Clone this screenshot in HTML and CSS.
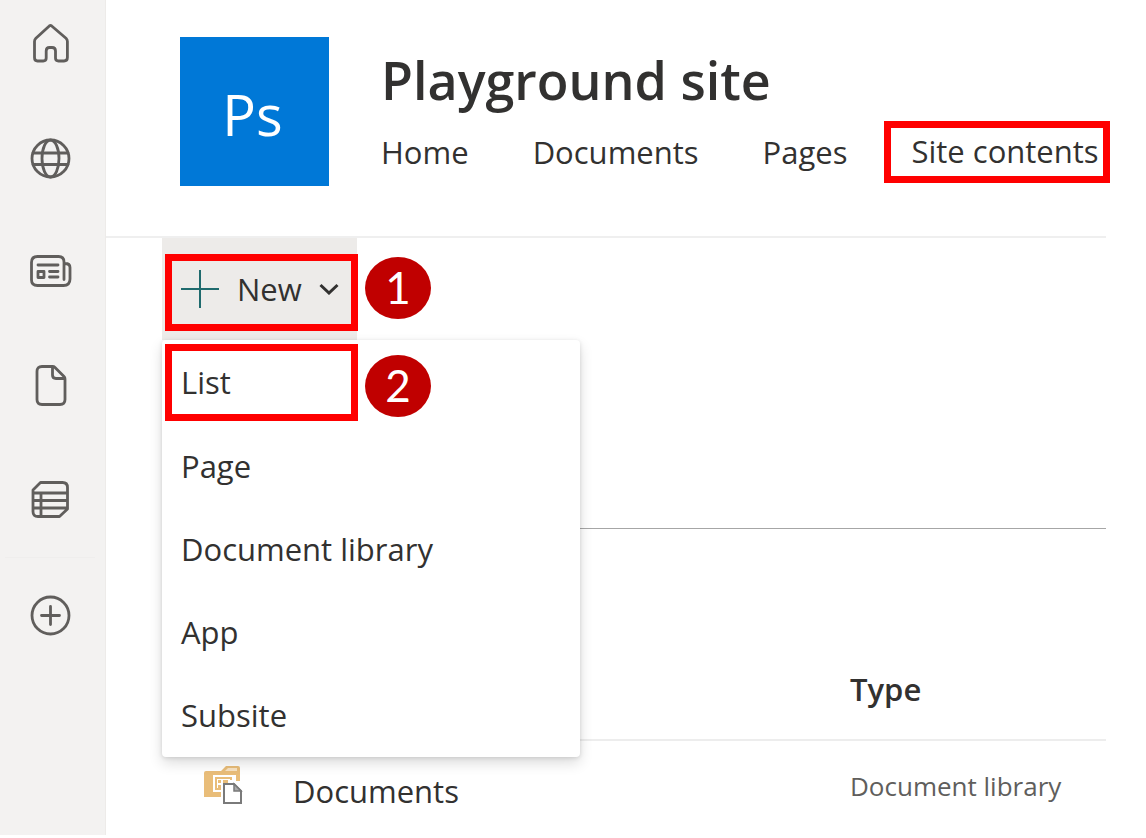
FILE: index.html
```html
<!DOCTYPE html>
<html lang="en">
<head>
<meta charset="utf-8">
<title>Playground site - Site contents</title>
<link rel="stylesheet" href="styles.css">
</head>
<body>
<div class="page">
  <nav class="rail" aria-label="Global">
    <a class="rail-link" href="#" aria-label="Home">
      <svg class="icon" viewBox="0 0 42 42"><path d="M20.600 2.700Q21.500 2 22.400 2.700L37 15.300Q38.400 16.700 38.400 18.500V34.500Q38.400 38 35 38H29.500Q26.500 38 26.500 35V28Q26.500 24.500 23 24.500H20.500Q17.200 24.500 17.200 28V35Q17.200 38 14.200 38H8.500Q5.500 38 5.500 34.500V18.500Q5.500 16.700 6.900 15.300Z"/></svg>
    </a>
    <a class="rail-link" href="#" aria-label="Sites">
      <svg class="icon" viewBox="0 0 42 42"><circle cx="21.500" cy="21.500" r="18.500"/><ellipse cx="21.500" cy="21.500" rx="8.500" ry="18.500"/><path d="M4 16h35M4 27.500h35"/></svg>
    </a>
    <a class="rail-link" href="#" aria-label="News">
      <svg class="icon" viewBox="0 0 42 42"><path d="M35 28.500V11Q35 5.500 29.500 5.500H8.500Q2.500 5.500 2.500 11.500V29Q2.500 34.500 8.500 34.500H34.500Q41 34.500 41 28V16.500Q41 12.500 36 12.500"/><path d="M9 14h20M20.500 20.500h8.500M20.500 26h8.500M9 20.500h6v6H9z"/></svg>
    </a>
    <a class="rail-link" href="#" aria-label="Files">
      <svg class="icon" viewBox="0 0 42 42"><path d="M13 1.500H23.500Q25 1.500 26 2.500L35 11.500Q36 12.500 36 14V34.500Q36 39.500 31 39.500H13Q8 39.500 8 34.500V6.500Q8 1.500 13 1.500ZM23.500 2V10Q23.500 13.500 27 13.500H35.500"/></svg>
    </a>
    <a class="rail-link" href="#" aria-label="Lists">
      <svg class="icon" viewBox="0 0 42 42"><path d="M11.500 3.500H33.500Q38.500 3.500 38.500 8.500V30L30.500 37.500H9Q4 37.500 4 32.500V11ZM4 14H38.500M4 21.500H38.500M4 29H38.500M12 14V37.500"/></svg>
    </a>
    <hr class="rail-divider">
    <a class="rail-link" href="#" aria-label="Create">
      <svg class="icon" viewBox="0 0 42 42"><circle cx="21.500" cy="21.500" r="18.500"/><path d="M12.500 21.500h18M21.500 12.500v18"/></svg>
    </a>
  </nav>

  <main class="main">
    <header class="site-header">
      <div class="site-logo">Ps</div>
      <div class="site-info">
        <h1 class="site-title">Playground site</h1>
        <nav class="site-nav" aria-label="Site">
          <a href="#">Home</a>
          <a href="#">Documents</a>
          <a href="#">Pages</a>
          <a class="marked-link" href="#">Site contents</a>
        </nav>
      </div>
    </header>

    <section class="commands">
      <div class="new-wrap">
        <button class="new-button marked" type="button" aria-haspopup="menu" aria-expanded="true">
          <svg class="plus" viewBox="0 0 38 38"><path d="M0 19h38M19 0v38"/></svg>
          <span>New</span>
          <svg class="chevron" viewBox="0 0 20 12"><path d="M1.500 2l8.500 8 8.500-8"/></svg>
        </button>
        <span class="step step-one">1</span>
        <span class="step step-two">2</span>
        <div class="menu" role="menu">
          <button class="menu-item marked" type="button" role="menuitem">List</button>
          <button class="menu-item" type="button" role="menuitem">Page</button>
          <button class="menu-item" type="button" role="menuitem">Document library</button>
          <button class="menu-item" type="button" role="menuitem">App</button>
          <button class="menu-item" type="button" role="menuitem">Subsite</button>
        </div>
      </div>
    </section>

    <section class="contents">
      <table class="items">
        <thead>
          <tr><th class="col-icon"></th><th class="col-name"></th><th>Type</th></tr>
        </thead>
        <tbody>
          <tr>
            <td class="cell-icon">
              <svg class="library-icon" viewBox="0 0 40 40"><path fill="#e9bd79" d="M0 7Q0 5 2 5H17L22 0H34Q36 0 36 2V15H32V9H8V26H17V31H0Z"/><path fill="#f8e3c3" d="M21 5L24 2H33V5Z"/><path fill="#e9bd79" d="M0 8H9V31H0Z"/><path fill="#fff" d="M9 9H30V15H18V26H9Z"/><path fill="#e9bd79" d="M11 11H28V14H26V13H13V22H17V24H11ZM14 14h3v3h-3zM19 14h5v3h-5zM14 19h3v3h-3z"/><path fill="#fff" stroke="#7a7a7a" stroke-width="2" d="M20 18H30L37 25V37H20Z"/><path fill="#aaa" stroke="#7a7a7a" stroke-width="1.500" d="M30 18V25H37Z"/></svg>
            </td>
            <td><a class="item-name" href="#">Documents</a></td>
            <td class="item-type">Document library</td>
          </tr>
        </tbody>
      </table>
    </section>
  </main>
</div>
</body>
</html>
```
FILE: styles.css
```css
* {
  box-sizing: border-box;
}

body {
  margin: 0;
  background: #fff;
  color: #323130;
  font-family: "Open Sans", "Noto Sans", sans-serif;
  font-size: 31px;
  line-height: 40px;
}

a {
  color: inherit;
  text-decoration: none;
}

button {
  font: inherit;
  color: inherit;
  background: none;
  border: 0;
  padding: 0;
  text-align: left;
}

.page {
  display: flex;
  min-height: 100vh;
  padding-bottom: 3px;
}

.rail {
  flex: none;
  display: flex;
  flex-direction: column;
  align-items: center;
  gap: 72px;
  width: 106px;
  padding: 23px 6px 23px 0;
  background: #f3f2f1;
  border-right: 1px solid #edebe9;
}

.rail-link,
.icon {
  display: block;
  width: 42px;
  height: 42px;
}

.icon {
  overflow: visible;
  fill: none;
  stroke: #605e5c;
  stroke-width: 2.8;
  stroke-linecap: round;
  stroke-linejoin: round;
}

.rail-divider {
  width: 90px;
  height: 1px;
  margin: -36px 0;
  border: 0;
  background: #efeeed;
}

.main {
  flex: 1;
  min-width: 0;
  padding-right: 40px;
}

.site-header {
  display: flex;
  gap: 52px;
  height: 238px;
  padding: 37px 0 0 74px;
  border-bottom: 2px solid #efefef;
}

.site-logo {
  flex: none;
  width: 149px;
  height: 149px;
  padding-right: 4px;
  background: #0078d7;
  color: #fff;
  font-size: 56px;
  line-height: 154px;
  text-align: center;
}

.site-title {
  margin: 0;
  padding-top: 8px;
  font-size: 52px;
  font-weight: 600;
  line-height: 70px;
  white-space: nowrap;
}

.site-nav {
  display: flex;
  align-items: center;
  gap: 64px;
  height: 62px;
  margin-top: 6px;
  margin-right: -8px;
  white-space: nowrap;
}

.marked-link {
  margin-left: -27px;
  padding: 3px 4px 5px 20px;
  border: 7px solid #f00;
}

.commands {
  padding-left: 56px;
}

.new-wrap {
  position: relative;
  width: 195px;
  height: 102px;
  padding: 16px 0 0 3px;
  background: #edebe9;
}

.marked {
  border: 7px solid #f00;
}

.new-button {
  display: flex;
  align-items: center;
  width: 193px;
  height: 77px;
  padding: 0 0 7px 9px;
}

.plus {
  width: 38px;
  height: 38px;
  margin-right: 18px;
  fill: none;
  stroke: #1f6a6d;
  stroke-width: 2;
}

.chevron {
  width: 20px;
  height: 12px;
  margin-left: 17px;
  fill: none;
  stroke: #323130;
  stroke-width: 3;
}

.menu {
  position: absolute;
  top: 102px;
  left: 0;
  width: 418px;
  padding: 4px 3px 1px;
  background: #fff;
  border-radius: 4px;
  box-shadow: 0 6px 14px rgba(0, 0, 0, 0.14), 0 1px 4px rgba(0, 0, 0, 0.12);
}

.menu-item {
  display: block;
  width: 100%;
  height: 83px;
  padding-left: 16px;
}

.menu-item.marked {
  width: 193px;
  height: 77px;
  margin-bottom: 3px;
  padding: 0 0 2px 9px;
}

.step {
  position: absolute;
  z-index: 1;
  left: 203px;
  width: 66px;
  height: 62px;
  border-radius: 50%;
  background: #c00000;
  color: #fff;
  font-family: Lato, sans-serif;
  font-size: 44px;
  line-height: 60px;
  text-align: center;
}

.step-one {
  top: 19px;
}

.step-two {
  top: 117px;
}

.contents {
  margin: 188px 0 0 56px;
  padding-top: 111px;
  border-top: 1px solid #a6a6a6;
}

.items {
  width: 100%;
  table-layout: fixed;
  border-collapse: collapse;
}

.items th {
  height: 100px;
  padding: 0 0 2px;
  border-bottom: 2px solid #ededed;
  font-weight: 600;
  text-align: left;
}

.items td {
  height: 94px;
  padding: 6px 0 0;
}

.items .col-icon {
  width: 131px;
}

.items .col-name {
  width: 557px;
}

.items .cell-icon {
  padding: 0 0 4px 42px;
}

.library-icon {
  display: block;
  width: 40px;
  height: 40px;
}

.items .item-type {
  padding: 0 0 4px;
  color: #605e5c;
  font-size: 26px;
}
```
